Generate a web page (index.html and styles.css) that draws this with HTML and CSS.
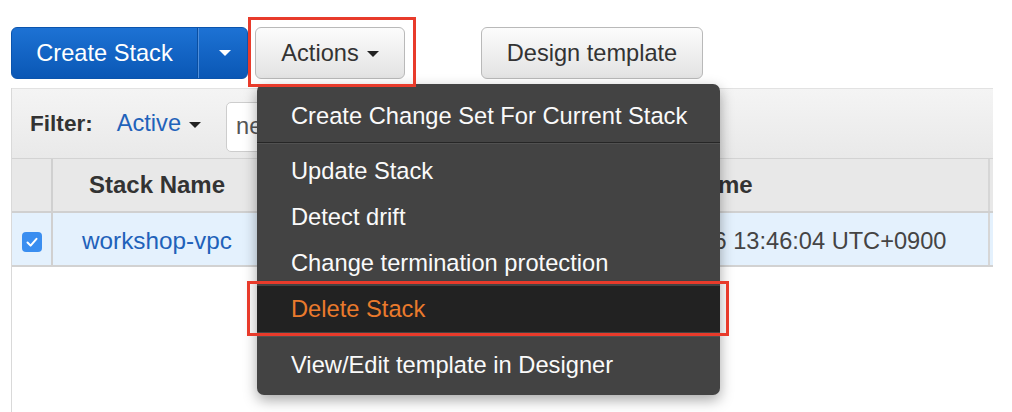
FILE: index.html
```html
<!DOCTYPE html>
<html lang="en">
<head>
<meta charset="utf-8">
<title>CloudFormation Stacks</title>
<link rel="stylesheet" href="styles.css">
</head>
<body>
<div class="page">
  <div class="toolbar">
    <div class="split">
      <button class="split-main">Create Stack</button>
      <button class="split-caret"><span class="tri tri-white"></span></button>
    </div>
    <button class="btn btn-actions">Actions <span class="tri tri-dark"></span></button>
    <button class="btn btn-design">Design template</button>
  </div>

  <div class="panel">
    <div class="filter-row">
      <span class="filter-label">Filter:</span>
      <span class="filter-active">Active <span class="tri tri-dark"></span></span>
      <div class="filter-input">ne</div>
    </div>
    <div class="table">
      <div class="row head">
        <div class="cell c-check"></div>
        <div class="cell c-name">Stack Name</div>
        <div class="cell c-status"></div>
        <div class="cell c-time">Created Time</div>
        <div class="cell c-rest"></div>
      </div>
      <div class="row data selected">
        <div class="cell c-check"><span class="checkbox"><svg viewBox="0 0 20 20" width="20" height="20"><path d="M5.5 10.5 L8.6 13.6 L14.5 6.8" fill="none" stroke="#fff" stroke-width="2" stroke-linecap="round" stroke-linejoin="round"/></svg></span></div>
        <div class="cell c-name"><span class="link">workshop-vpc</span></div>
        <div class="cell c-status"></div>
        <div class="cell c-time">2019-03-06 13:46:04 UTC+0900</div>
        <div class="cell c-rest"></div>
      </div>
    </div>
    <div class="empty"></div>
  </div>

  <div class="menu">
    <div class="menu-item">Create Change Set For Current Stack</div>
    <div class="menu-divider first"></div>
    <div class="menu-item">Update Stack</div>
    <div class="menu-item">Detect drift</div>
    <div class="menu-item">Change termination protection</div>
    <div class="menu-item danger">Delete Stack</div>
    <div class="menu-divider second"></div>
    <div class="menu-item">View/Edit template in Designer</div>
  </div>

  <div class="callout callout-actions"></div>
  <div class="callout callout-delete"></div>
</div>
</body>
</html>
```

FILE: styles.css
```css
* { box-sizing: border-box; }

html, body {
  margin: 0;
  padding: 0;
  background: #ffffff;
}

body {
  font-family: "Liberation Sans", Arial, Helvetica, sans-serif;
  color: #333;
  width: 1012px;
  height: 412px;
  overflow: hidden;
}

.page {
  position: relative;
  width: 1012px;
  height: 412px;
}

/* ---------- toolbar ---------- */
.toolbar {
  display: flex;
  align-items: center;
  padding: 27px 0 0 11px;
  height: 79px;
}

button {
  font-family: inherit;
  font-size: 23.6px;
  margin: 0;
  cursor: pointer;
}

.split {
  display: flex;
  height: 52px;
  width: 237px;
  border-radius: 6px;
  border: 1px solid #0b54ad;
  background: linear-gradient(#1d72d4, #0a57b5);
  overflow: hidden;
}

.split-main {
  width: 186px;
  border: 0;
  background: transparent;
  color: #fff;
  padding: 0;
  border-right: 1px solid #0a4ea0;
}

.split-caret {
  flex: 1;
  border: 0;
  background: transparent;
  border-left: 1px solid #4f8fdc;
  display: flex;
  align-items: center;
  justify-content: center;
  padding: 0 0 0 4px;
}

.tri {
  display: inline-block;
  width: 0;
  height: 0;
  border-left: 6px solid transparent;
  border-right: 6px solid transparent;
  vertical-align: middle;
}
.tri-white { border-top: 6px solid #fff; }
.tri-dark { border-top: 6px solid #222; }

.btn {
  height: 52px;
  border: 1px solid #b9b9b9;
  border-radius: 6px;
  background: linear-gradient(#fcfcfc, #e3e3e3);
  color: #333;
  display: flex;
  align-items: center;
  justify-content: center;
  padding: 0;
}

.btn-actions {
  margin-left: 7px;
  width: 150px;
  gap: 8px;
}
.btn-actions .tri { margin-top: 1px; }

.btn-design {
  margin-left: 76px;
  width: 222px;
}

/* ---------- panel ---------- */
.panel {
  margin: 9px 0 0 11px;
  width: 982px;
  height: 324px;
  border-left: 1px solid #d9d9d9;
  display: flex;
  flex-direction: column;
}

.filter-row {
  height: 71px;
  display: flex;
  align-items: center;
  padding-left: 18px;
  background: linear-gradient(#f4f4f4, #e9e9e9);
  border-top: 1px solid #e2e2e2;
  border-bottom: 1px solid #d3d3d3;
}

.filter-label {
  font-weight: bold;
  font-size: 22.6px;
  color: #333;
}

.filter-active {
  margin-left: 24px;
  font-size: 23.6px;
  color: #1f62ba;
  display: flex;
  align-items: center;
  gap: 8px;
}
.filter-active .tri { margin-top: 2px; }

.filter-input {
  margin-left: 25px;
  height: 50px;
  width: 340px;
  background: #fff;
  border: 1px solid #cdcdcd;
  border-radius: 5px;
  font-size: 23.6px;
  color: #555;
  display: flex;
  align-items: center;
  padding-left: 9px;
  margin-top: 6px;
}

.table {
  display: flex;
  flex-direction: column;
}

.row {
  display: grid;
  grid-template-columns: 41px 208px 329px 400px 3px;
  height: 54px;
}

.row.head {
  background: #e8e8e8;
  border-bottom: 2px solid #d0d0d0;
  font-weight: bold;
  font-size: 24px;
  color: #333;
}

.row.data {
  border-bottom: 2px solid #d2d2d2;
  font-size: 23.6px;
  color: #444;
}

.row.selected { background: #e4f1fd; }

.cell {
  display: flex;
  align-items: center;
  white-space: nowrap;
  overflow: hidden;
}

.c-check {
  justify-content: center;
  border-right: 2px solid #d0d0d0;
}

.c-name { justify-content: center; }

.c-time { padding-left: 16px; border-right: 2px solid #d6d6d6; }

.head .c-time { padding-left: 11px; }

.checkbox {
  width: 20px;
  height: 20px;
  border-radius: 4px;
  background: #3a8ef0;
  display: block;
  margin-top: 2px;
}
.checkbox svg { display: block; }

.link { color: #1f62ba; font-size: 24.3px; }

.data .cell { padding-top: 4px; }

.empty {
  flex: 1;
  background: #fff;
}

/* ---------- dropdown menu ---------- */
.menu {
  position: absolute;
  left: 257px;
  top: 84px;
  width: 463px;
  height: 311px;
  background: #434343;
  border-radius: 7px;
  box-shadow: 0 5px 14px rgba(0, 0, 0, 0.35);
  padding-top: 9px;
  overflow: hidden;
}

.menu-item {
  height: 46px;
  display: flex;
  align-items: center;
  padding-left: 34px;
  font-size: 23.7px;
  color: #fafafa;
  white-space: nowrap;
}

.menu-item.danger {
  background: #222222;
  color: #ea7a2c;
}

.menu-divider {
  height: 2px;
  border-top: 1px solid #262626;
  border-bottom: 1px solid #515151;
}
.menu-divider.first { margin: 3px 0 4px; }
.menu-divider.second { margin: 3px 0 5px; }

/* ---------- red annotation boxes ---------- */
.callout {
  position: absolute;
  border: 3px solid #e83b2b;
  pointer-events: none;
}

.callout-actions {
  left: 248px;
  top: 17px;
  width: 168px;
  height: 70px;
}

.callout-delete {
  left: 247px;
  top: 281px;
  width: 482px;
  height: 55px;
}
```
